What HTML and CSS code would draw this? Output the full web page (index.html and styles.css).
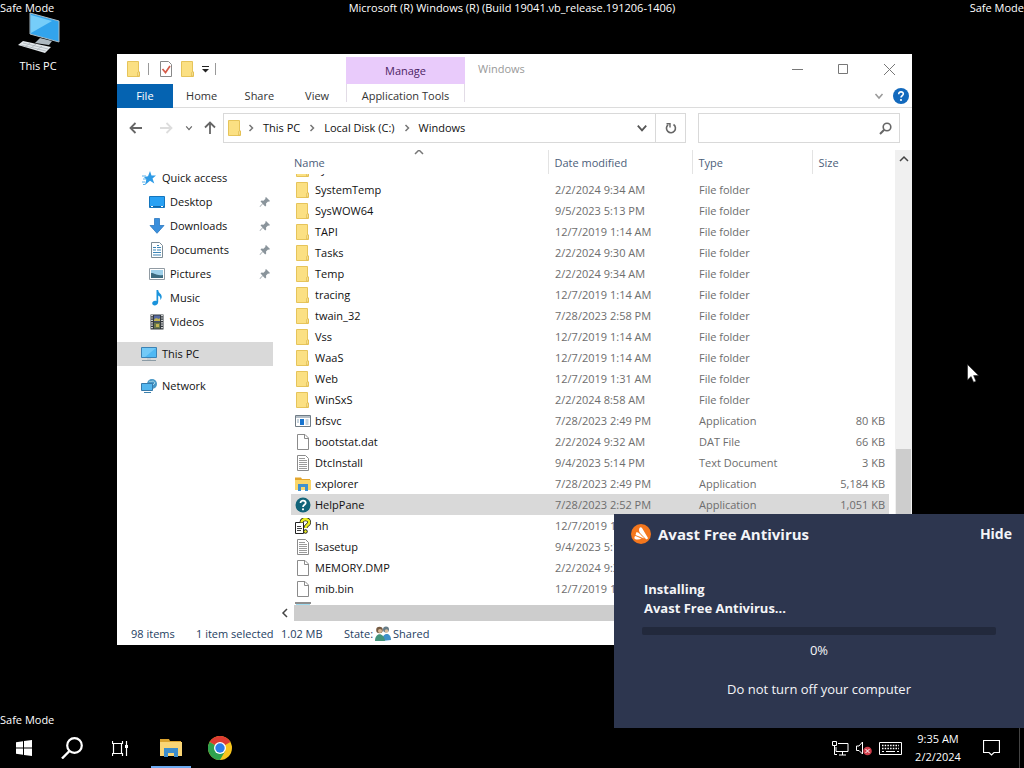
FILE: index.html
```html
<!DOCTYPE html>
<html lang="en">
<head>
<meta charset="utf-8">
<meta name="viewport" content="width=device-width, initial-scale=1">
<title>Windows</title>
<link rel="stylesheet" href="styles.css">
</head>
<body>
<svg class="defs" aria-hidden="true">
  <symbol id="folder" viewBox="0 0 16 16"><path d="M1.500 .5h11v10.500h1v4.500h-12z" fill="#fbe083" stroke="#e6c45a"/><path d="M11.500 15v-3.500l1.500-1v4.500z" fill="#fff3b8" stroke="#dfb94a" stroke-width=".7"/></symbol>
  <symbol id="blank" viewBox="0 0 16 16"><path d="M2.500.5h7.500l3.500 3.500v11.500h-11z" fill="#fff" stroke="#8b8b8b"/><path d="M9.500.5v4h4" fill="none" stroke="#8b8b8b"/></symbol>
  <symbol id="text" viewBox="0 0 16 16"><path d="M2.500.5h8l3 3v12h-11z" fill="#fff" stroke="#8b8b8b"/><path d="M4 3.500h6M4 5.500h8M4 7.500h8M4 9.500h8M4 11.500h8M4 13.500h8" stroke="#9b9b9b"/></symbol>
  <symbol id="app" viewBox="0 0 16 16"><path d="M.5 2.500h15v11H.5z" fill="#fff" stroke="#707c86"/><path d="M1 3h14v2H1z" fill="#b4bec6"/><path d="M5 6h4v6H5z" fill="#1874cf"/><path d="M2 7h2M2 9h2M10.500 7h3M10.500 9h3M10.500 11h3" stroke="#8fa9bd"/></symbol>
  <symbol id="explorer" viewBox="0 0 16 16"><path d="M0 1.500h6l1 1.500h8v11H0z" fill="#e3a52c"/><path d="M0 4h16v10H0z" fill="#fbd669"/><path d="M3 15V8h10v7h-3v-4H6v4z" fill="#3f91cf"/></symbol>
  <symbol id="help" viewBox="0 0 16 16"><circle cx="8" cy="8" r="7.500" fill="#126479"/><path d="M5.500 6c0-3.500 5.500-3 5.200 0C10.500 7.700 8 7.800 8 10" fill="none" stroke="#fff" stroke-width="1.800"/><circle cx="8" cy="12.300" r="1.100" fill="#fff"/></symbol>
  <symbol id="hh" viewBox="0 0 16 16"><path d="M.5 4.500h8v11h-8z" fill="#fff" stroke="#222"/><path d="M2 8.500h4M2 10.500h5M2 12.500h4" stroke="#444"/><path d="M6.500 4.500C6.500 0 15 0 14 5c-.3 2-3.500 2.300-3.500 5" fill="none" stroke="#222" stroke-width="4"/><path d="M6.500 4.500C6.500 0 15 0 14 5c-.3 2-3.500 2.300-3.500 5" fill="none" stroke="#e9ed20" stroke-width="2.500"/><circle cx="10.500" cy="13.500" r="1.800" fill="#e9ed20" stroke="#222"/></symbol>
  <symbol id="notepad" viewBox="0 0 16 16"><path d="M0 0h16v2H0z" fill="#8e8e8e"/><path d="M1 2h14v13H1z" fill="#9edbf0"/></symbol>
  <symbol id="star" viewBox="0 0 16 16"><path d="M9 1l1.500 4.500H15l-3.500 3 1.800 5L9 10.800 4 15l1.300-5.500L3 7l4-.8z" fill="#2e9be6"/><path d="M1 6h4M2 9h3M1 12h3M2 14.500h2" stroke="#5ab1ea"/></symbol>
  <symbol id="desktop" viewBox="0 0 16 16"><path d="M.5 2.500h15v11H.5z" fill="#28a1f4" stroke="#1475bd"/><path d="M1 12.500h14" stroke="#1267a8"/><path d="M2 12.500h2m8 0h2" stroke="#fff"/></symbol>
  <symbol id="down" viewBox="0 0 16 16"><path d="M5.500.5h5v7h4.500L8 15.300 1 7.500h4.500z" fill="#3a8fdc" stroke="#2b77c0" stroke-width=".8"/></symbol>
  <symbol id="docs" viewBox="0 0 16 16"><path d="M2.500.5h8l3 3v12h-11z" fill="#fff" stroke="#7c8c96"/><path d="M4 5.500h3M8 3.500h2M8 5.500h4M4 8h3M8 8h4M4 10.500h8M4 13h8" stroke="#3c86b8" stroke-width="1.200"/></symbol>
  <symbol id="pics" viewBox="0 0 16 16"><path d="M.5 2.500h15v11H.5z" fill="#fff" stroke="#919ba3"/><path d="M2 4h12v8H2z" fill="#9ed0ea"/><path d="M2 7c4 0 5 3 12 2v3H2z" fill="#3c6b80"/></symbol>
  <symbol id="music" viewBox="0 0 16 16"><path d="M7.500 0h1.700c.2 3.500 4.500 4 3.300 8-.3 1-.8 1.500-1.300 2 .6-2.600-.6-4-2-4.500V12c0 4-6 4.500-6 1.300 0-2 2.300-3 4.300-2.200z" fill="#1a93dc"/></symbol>
  <symbol id="video" viewBox="0 0 16 16"><path d="M1.500.5h13v15h-13z" fill="#33383d"/><path d="M3 1v14M13 1v14" stroke="#fff" stroke-width="1.500" stroke-dasharray="1.200 1.200"/><path d="M5 1.500h6v6H5z" fill="#566aa3"/><path d="M5 8.500h6v6H5z" fill="#67774c"/><path d="M5 6c3-4 4 1 6-2v3H5zM7 10h3v3H7z" fill="#c3b451"/></symbol>
  <symbol id="pc" viewBox="0 0 16 16"><path d="M.5 1.500h15v10H.5z" fill="#4fb8f3" stroke="#3b82b5"/><path d="M1 2h14L4 11H1z" fill="#8bd3fa" opacity=".6"/><path d="M1 14.500h14" stroke="#8b9ba5"/><path d="M6 12h4v2H6z" fill="#c5cdd2"/></symbol>
  <symbol id="network" viewBox="0 0 16 16"><circle cx="11" cy="6" r="5" fill="#4797c6"/><path d="M8 3c2 2 4-2 6 2l-3 3" fill="none" stroke="#a6d6e9"/><path d="M.5 5.500h11v7H.5z" fill="#53b6ee" stroke="#3679a9"/><path d="M3 14.500h7" stroke="#3c81ad"/></symbol>
  <symbol id="pin" viewBox="0 0 12 12"><path d="M7 1l4 4-1 .8-1-.3-2 2 .2 2-1 1L3.800 8 1 11l-.4-.4L3.500 7.600 1.500 5.500l1-1 2 .2 2-2L6.200 2z" fill="#8a949b"/></symbol>
  <symbol id="chev-down" viewBox="0 0 10 10"><path d="M1.500 3l3.500 4 3.500-4" fill="none" stroke="currentColor" stroke-width="1.500"/></symbol>
  <symbol id="chev-up" viewBox="0 0 10 10"><path d="M1 7l4-4 4 4" fill="none" stroke="currentColor" stroke-width="1.500"/></symbol>
  <symbol id="chev-right" viewBox="0 0 10 10"><path d="M3.500 2l3 3-3 3" fill="none" stroke="currentColor" stroke-width="1.500"/></symbol>
  <symbol id="arrow" viewBox="0 0 14 14"><path d="M13 7H2M6.500 2L1.500 7l5 5" fill="none" stroke="currentColor" stroke-width="1.800"/></symbol>
</svg>

<div class="screen">
  <main class="desktop">
    <div class="safe-top"><span>Safe Mode</span><span>Microsoft (R) Windows (R) (Build 19041.vb_release.191206-1406)</span><span>Safe Mode</span></div>
    <a class="shortcut" href="#">
      <svg width="46" height="42" viewBox="0 0 46 42"><path d="M15 1l29 8v21l-29-8z" fill="#32a4ed" stroke="#a9bac4"/><path d="M16 3l21 6-21 12z" fill="#76cdf9"/><path d="M25 26l12 3-3 4-14-2z" fill="#aeb9c0"/><path d="M8 29l28 6-6 6L3 33z" fill="#e3e8eb"/><path d="M8 31l25 6M6 33l25 6M15 31l-5 4M21 32l-5 4M27 34l-5 4" stroke="#a4adb3" stroke-width=".7"/></svg>
      <span>This PC</span>
    </a>
    <span class="safe-bottom">Safe Mode</span>

    <section class="window" aria-label="Windows folder">
      <header class="ribbon">
        <div class="ribbon-left">
          <div class="quick">
            <svg class="i16"><use href="#folder"/></svg><i class="bar"></i>
            <button class="plain check" aria-label="Properties"><svg class="i16" viewBox="0 0 16 16"><path d="M2.500.5h8l3 3v12h-11z" fill="#fff" stroke="#888"/><path d="M4.500 8l3 3.500L12 5" fill="none" stroke="#d55b49" stroke-width="1.700"/></svg></button>
            <button class="plain" aria-label="New folder"><svg class="i16"><use href="#folder"/></svg></button>
            <button class="plain" aria-label="Customize toolbar"><svg width="7" height="8" viewBox="0 0 7 8"><path d="M0 1.500h7" stroke="#222"/><path d="M0 4h7L3.500 7.500z" fill="#222"/></svg></button><i class="bar"></i>
          </div>
          <nav class="tabs"><button class="file">File</button><button>Home</button><button>Share</button><button>View</button></nav>
        </div>
        <div class="context"><div class="manage">Manage</div><button>Application Tools</button></div>
        <div class="ribbon-right">
          <div class="caption"><span class="title">Windows</span>
            <button aria-label="Minimize"><svg width="11" height="11"><path d="M0 5.500h11" stroke="#777"/></svg></button>
            <button aria-label="Maximize"><svg width="11" height="11"><path d="M.5.5h9v9h-9z" fill="none" stroke="#777"/></svg></button>
            <button aria-label="Close"><svg width="11" height="11"><path d="M0 0l11 11M11 0L0 11" stroke="#777"/></svg></button>
          </div>
          <div class="ribbon-tools"><button class="plain" aria-label="Expand ribbon"><svg class="i10"><use href="#chev-down"/></svg></button>
            <button class="plain" aria-label="Help"><svg class="i16" viewBox="0 0 16 16"><circle cx="8" cy="8" r="8" fill="#1269bd"/><path d="M5.700 6.200c0-3.300 4.800-2.800 4.600-.2C10.200 7.500 8 7.700 8 9.600" fill="none" stroke="#fff" stroke-width="1.600"/><circle cx="8" cy="12" r="1.100" fill="#fff"/></svg></button></div>
        </div>
      </header>

      <div class="address">
        <div class="history">
          <button class="plain" aria-label="Back"><svg class="i14"><use href="#arrow"/></svg></button>
          <button class="plain off" aria-label="Forward"><svg class="i14 flip"><use href="#arrow"/></svg></button>
          <button class="plain recent" aria-label="Recent locations"><svg class="i8"><use href="#chev-down"/></svg></button>
          <button class="plain" aria-label="Up"><svg class="i14 up"><use href="#arrow"/></svg></button>
        </div>
        <div class="path">
          <svg class="i16"><use href="#folder"/></svg>
          <svg class="i10 first"><use href="#chev-right"/></svg><a href="#">This PC</a>
          <svg class="i10"><use href="#chev-right"/></svg><a href="#">Local Disk (C:)</a>
          <svg class="i10"><use href="#chev-right"/></svg><a href="#">Windows</a>
          <button class="plain drop" aria-label="Previous locations"><svg class="i12"><use href="#chev-down"/></svg></button>
          <button class="refresh" aria-label="Refresh"><svg width="12" height="12" viewBox="0 0 12 12"><path d="M8.500 2.500A4.500 4.500 0 1 1 3 2.800" fill="none" stroke="#666" stroke-width="1.600"/><path d="M1.500 1.700H5v3.800" fill="none" stroke="#666" stroke-width="1.400"/></svg></button>
        </div>
        <div class="search"><input type="search" aria-label="Search Windows"><svg width="13" height="13" viewBox="0 0 13 13"><circle cx="8" cy="5" r="3.800" fill="none" stroke="#666" stroke-width="1.600"/><path d="M5.200 7.800L1 12" stroke="#666" stroke-width="2"/></svg></div>
      </div>

      <div class="content">
        <nav class="side">
          <a href="#"><svg class="i16"><use href="#star"/></svg>Quick access</a>
          <a class="sub" href="#"><svg class="i16"><use href="#desktop"/></svg>Desktop<svg class="pin"><use href="#pin"/></svg></a>
          <a class="sub" href="#"><svg class="i16"><use href="#down"/></svg>Downloads<svg class="pin"><use href="#pin"/></svg></a>
          <a class="sub" href="#"><svg class="i16"><use href="#docs"/></svg>Documents<svg class="pin"><use href="#pin"/></svg></a>
          <a class="sub" href="#"><svg class="i16"><use href="#pics"/></svg>Pictures<svg class="pin"><use href="#pin"/></svg></a>
          <a class="sub" href="#"><svg class="i16"><use href="#music"/></svg>Music</a>
          <a class="sub" href="#"><svg class="i16"><use href="#video"/></svg>Videos</a>
          <a class="group current" href="#"><svg class="i16"><use href="#pc"/></svg>This PC</a>
          <a class="group" href="#"><svg class="i16"><use href="#network"/></svg>Network</a>
        </nav>
        <div class="pane">
          <div class="list">
            <table>
              <thead><tr><th class="c-name">Name<svg class="i10 sort"><use href="#chev-up"/></svg></th><th class="c-date">Date modified</th><th class="c-type">Type</th><th class="c-size">Size</th></tr></thead>
              <tbody>
                <tr class="cut"><td><div><span class="f"><svg class="i16"><use href="#folder"/></svg>SystemResources</span></div></td><td></td><td></td><td></td></tr>
                <tr><td><span class="f"><svg class="i16"><use href="#folder"/></svg>SystemTemp</span></td><td>2/2/2024 9:34 AM</td><td>File folder</td><td></td></tr>
                <tr><td><span class="f"><svg class="i16"><use href="#folder"/></svg>SysWOW64</span></td><td>9/5/2023 5:13 PM</td><td>File folder</td><td></td></tr>
                <tr><td><span class="f"><svg class="i16"><use href="#folder"/></svg>TAPI</span></td><td>12/7/2019 1:14 AM</td><td>File folder</td><td></td></tr>
                <tr><td><span class="f"><svg class="i16"><use href="#folder"/></svg>Tasks</span></td><td>2/2/2024 9:30 AM</td><td>File folder</td><td></td></tr>
                <tr><td><span class="f"><svg class="i16"><use href="#folder"/></svg>Temp</span></td><td>2/2/2024 9:34 AM</td><td>File folder</td><td></td></tr>
                <tr><td><span class="f"><svg class="i16"><use href="#folder"/></svg>tracing</span></td><td>12/7/2019 1:14 AM</td><td>File folder</td><td></td></tr>
                <tr><td><span class="f"><svg class="i16"><use href="#folder"/></svg>twain_32</span></td><td>7/28/2023 2:58 PM</td><td>File folder</td><td></td></tr>
                <tr><td><span class="f"><svg class="i16"><use href="#folder"/></svg>Vss</span></td><td>12/7/2019 1:14 AM</td><td>File folder</td><td></td></tr>
                <tr><td><span class="f"><svg class="i16"><use href="#folder"/></svg>WaaS</span></td><td>12/7/2019 1:14 AM</td><td>File folder</td><td></td></tr>
                <tr><td><span class="f"><svg class="i16"><use href="#folder"/></svg>Web</span></td><td>12/7/2019 1:31 AM</td><td>File folder</td><td></td></tr>
                <tr><td><span class="f"><svg class="i16"><use href="#folder"/></svg>WinSxS</span></td><td>2/2/2024 8:58 AM</td><td>File folder</td><td></td></tr>
                <tr><td><span class="f"><svg class="i16"><use href="#app"/></svg>bfsvc</span></td><td>7/28/2023 2:49 PM</td><td>Application</td><td>80 KB</td></tr>
                <tr><td><span class="f"><svg class="i16"><use href="#blank"/></svg>bootstat.dat</span></td><td>2/2/2024 9:32 AM</td><td>DAT File</td><td>66 KB</td></tr>
                <tr><td><span class="f"><svg class="i16"><use href="#text"/></svg>DtcInstall</span></td><td>9/4/2023 5:14 PM</td><td>Text Document</td><td>3 KB</td></tr>
                <tr><td><span class="f"><svg class="i16"><use href="#explorer"/></svg>explorer</span></td><td>7/28/2023 2:49 PM</td><td>Application</td><td>5,184 KB</td></tr>
                <tr class="selected"><td><span class="f"><svg class="i16"><use href="#help"/></svg>HelpPane</span></td><td>7/28/2023 2:52 PM</td><td>Application</td><td>1,051 KB</td></tr>
                <tr><td><span class="f"><svg class="i16"><use href="#hh"/></svg>hh</span></td><td>12/7/2019 1:14 AM</td><td></td><td></td></tr>
                <tr><td><span class="f"><svg class="i16"><use href="#text"/></svg>lsasetup</span></td><td>9/4/2023 5:14 PM</td><td></td><td></td></tr>
                <tr><td><span class="f"><svg class="i16"><use href="#blank"/></svg>MEMORY.DMP</span></td><td>2/2/2024 9:32 AM</td><td></td><td></td></tr>
                <tr><td><span class="f"><svg class="i16"><use href="#blank"/></svg>mib.bin</span></td><td>12/7/2019 1:14 AM</td><td></td><td></td></tr>
                <tr><td><span class="f"><svg class="i16"><use href="#notepad"/></svg></span></td><td></td><td></td><td></td></tr>
              </tbody>
            </table>
          </div>
          <div class="hscroll"><button class="plain" aria-label="Scroll left"><svg class="i10 left"><use href="#chev-up"/></svg></button><div class="thumb"></div></div>
        </div>
        <div class="vscroll"><button class="plain" aria-label="Scroll up"><svg class="i10"><use href="#chev-up"/></svg></button><div class="track"></div><div class="thumb"></div></div>
      </div>
      <footer class="status"><span class="s-items">98 items</span><span class="s-sel">1 item selected</span><span class="s-mb">1.02 MB</span><span>State:</span><svg class="i16" viewBox="0 0 16 16"><circle cx="11" cy="3.500" r="3" fill="#657c88"/><path d="M7 15c0-9 9-9 9-1z" fill="#3e91c9"/><circle cx="4.500" cy="4" r="3.300" fill="#765b42"/><circle cx="5" cy="5" r="2" fill="#d6b793"/><path d="M0 15c0-9 9-9 10 0z" fill="#43947b"/><circle cx="11.500" cy="5" r="1.800" fill="#d9bd9d"/></svg><span>Shared</span></footer>
    </section>

    <svg class="cursor" width="12" height="19" viewBox="0 0 12 19"><path d="M.5.500v15.500l3.600-3.500 2.500 5.700 2.400-1-2.400-5.600h5z" fill="#fff" stroke="#222" stroke-width=".6"/></svg>

    <section class="avast">
      <header><svg width="20" height="20" viewBox="0 0 20 20"><circle cx="10" cy="10" r="10" fill="#f4771d"/><path d="M8.500 4c.6-1 1.900-1 2.500 0l5.700 9.500c.6 1.300-.7 2.200-1.800 1.400L9.500 9.500C8 8 7.600 6 8.500 4z" fill="#fff"/><path d="M5.500 8c2 .3 3 1.500 8 6.500-4-1.500-7-2.800-9-3.500z" fill="#fff"/><path d="M4 12c2.500.8 4.500 1.500 6.500 2.800-2 .8-5 1-6.500.2-1-.6-.7-1.800 0-3z" fill="#fff"/></svg><h1>Avast Free Antivirus</h1><button>Hide</button></header>
      <p class="installing">Installing<br>Avast Free Antivirus...</p>
      <div class="progress" role="progressbar" aria-label="Installation" aria-valuenow="0"></div>
      <p class="percent">0%</p>
      <p class="warning">Do not turn off your computer</p>
    </section>
  </main>

  <footer class="taskbar">
    <button aria-label="Start"><svg width="16" height="16" viewBox="0 0 16 16"><path d="M0 2.300L7 1.300v6.200H0zM8 1.100L16 0v7.500H8zM0 8.500h7v6.200l-7-1zM8 8.500h8V16l-8-1.100z" fill="#fff"/></svg></button>
    <button aria-label="Search"><svg width="22" height="22" viewBox="0 0 22 22"><circle cx="13.500" cy="8.500" r="7.300" fill="none" stroke="#fff" stroke-width="2.200"/><path d="M8.500 14L1 21.500" stroke="#fff" stroke-width="2.400"/></svg></button>
    <button aria-label="Task view"><svg width="17" height="17" viewBox="0 0 17 17"><path d="M.5 1v2.500h10V1M.5 16v-2.500h10V16M1.500 4v9M9.500 4v9M14.500 1v15" fill="none" stroke="#fff" stroke-width="1.200"/><path d="M13 5h3v3h-3z" fill="#fff"/></svg></button>
    <button class="open" aria-label="File Explorer"><svg width="22" height="20" viewBox="0 0 22 20"><path d="M0 1h9l1 2h11v4H0z" fill="#dca42f"/><path d="M0 4h22v14H0z" fill="#fad575"/><path d="M4 19v-9h14v9h-4v-4H8v4z" fill="#3d8dcc"/></svg></button>
    <button aria-label="Chrome"><svg width="24" height="24" viewBox="0 0 24 24"><circle cx="12" cy="12" r="12" fill="#f8c51d"/><path d="M12 12L1.600 6A12 12 0 0 1 22.400 6z" fill="#de3c32"/><path d="M1.600 6A12 12 0 0 0 12 24l5.200-9L12 12z" fill="#2fa24e"/><circle cx="12" cy="12" r="6" fill="#fff"/><circle cx="12" cy="12" r="4.700" fill="#2b7de9"/></svg></button>
    <div class="tray">
      <svg width="17" height="15" viewBox="0 0 17 15"><path d="M6 2.500h10v8H4V6M7 14h7M10.500 11v3M.5.500h4v4h-4zM2.500 5v8.500H5" fill="none" stroke="#fff"/></svg>
      <svg width="16" height="15" viewBox="0 0 16 15"><path d="M.5 5h2.500l3.500-4v12L3 9.500H.5z" fill="none" stroke="#fff"/><circle cx="11.500" cy="10" r="4.300" fill="#d13e4b"/><path d="M9.500 8l4 4M13.500 8l-4 4" stroke="#fff"/></svg>
      <svg width="23" height="13" viewBox="0 0 23 13"><path d="M.5.500h22v12H.5z" fill="none" stroke="#fff"/><path d="M3 3.500h17M3 6.500h17" stroke="#fff" stroke-width="1.400" stroke-dasharray="1.500 1.200"/><path d="M3 9.500h2M7 9.500h9M18 9.500h2" stroke="#fff"/></svg>
      <time datetime="2024-02-02T09:35">9:35 AM<br>2/2/2024</time>
      <button aria-label="Notifications"><svg width="17" height="16" viewBox="0 0 17 16"><path d="M.5.500h16v12h-5.500L8.500 15 6 12.500H.5z" fill="none" stroke="#fff" stroke-width="1.200"/></svg></button>
    </div>
  </footer>
</div>
</body>
</html>
```
FILE: styles.css
```css
* { box-sizing: border-box; }
body { margin: 0; background: #000; color: #fff; font: 11px/16px "Open Sans", "Noto Sans", sans-serif; }
button { font: inherit; color: inherit; background: none; border: 0; padding: 0; display: flex; align-items: center; justify-content: center; }
a { color: inherit; text-decoration: none; }
p, h1 { margin: 0; }
svg { flex: none; display: block; }
.defs { position: absolute; width: 0; height: 0; }
.i16 { width: 16px; height: 16px; }
.i14 { width: 14px; height: 14px; }
.i12 { width: 12px; height: 12px; }
.i10 { width: 10px; height: 10px; }
.i8 { width: 8px; height: 8px; }
.flip { transform: rotate(180deg); }
.up { transform: rotate(90deg); }
.left { transform: rotate(-90deg); }

.screen { height: 100vh; display: flex; flex-direction: column; overflow: hidden; }
.desktop { flex: 1; min-height: 0; position: relative; display: flex; flex-direction: column; align-items: flex-start; }
.safe-top { width: 100%; display: flex; justify-content: space-between; }
.safe-bottom { margin-top: auto; }
.shortcut { display: flex; flex-direction: column; align-items: center; width: 76px; margin-top: -4px; gap: 4px; }

/* explorer window */
.window { position: absolute; left: 117px; right: 112px; top: 54px; bottom: 83px; background: #fff; color: #222; display: flex; flex-direction: column; overflow: hidden; }
.ribbon { display: flex; height: 54px; border-bottom: 1px solid #dcdcdc; }
.ribbon-left { width: 229px; }
.quick { height: 30px; padding-left: 9px; display: flex; align-items: center; gap: 6px; }
.bar { width: 1px; height: 12px; background: #999; }
.check { margin-left: 3px; }
.tabs { display: flex; height: 24px; }
.tabs button { width: 58px; color: #333; }
.tabs .file { width: 56px; background: #0563b1; color: #fff; }
.context { width: 119px; padding-top: 3px; color: #333; }
.manage { height: 27px; background: #e9cbfb; color: #4c2464; text-align: center; line-height: 28px; }
.context button { width: 100%; height: 18px; padding-top: 6px; border: solid #e2dce6; border-width: 0 1px; }
.ribbon-right { flex: 1; }
.caption { height: 30px; display: flex; align-items: center; }
.title { margin-right: auto; padding-left: 13px; color: #999; }
.caption button { width: 46px; height: 28px; }
.ribbon-tools { display: flex; align-items: center; justify-content: flex-end; gap: 9px; height: 23px; padding-right: 3px; color: #999; }

.address { display: flex; height: 42px; padding: 5px 12px 7px 0; }
.history { display: flex; align-items: center; gap: 10px; width: 106px; padding-left: 12px; color: #666; }
.off { color: #ddd; margin-left: 6px; }
.recent { margin-left: 2px; }
.path { flex: 1; display: flex; align-items: center; gap: 7px; border: 1px solid #d9d9d9; padding-left: 3px; color: #111; }
.path > svg { color: #777; }
.path > .first { margin-left: -4px; }
.drop { margin-left: auto; color: #555; }
.refresh { width: 30px; height: 100%; border-left: 1px solid #d9d9d9; }
.search { width: 202px; margin-left: 12px; display: flex; align-items: center; border: 1px solid #d9d9d9; padding-right: 7px; }
.search input { flex: 1; min-width: 0; height: 100%; border: 0; outline: 0; background: none; }

.content { flex: 1; min-height: 0; display: flex; }
.side { width: 156px; padding-top: 16px; color: #111; }
.side a { display: flex; align-items: center; gap: 5px; height: 24px; padding-left: 24px; }
.side .sub { padding-left: 32px; }
.side .group { margin-top: 8px; }
.side .current { background: #d9d9d9; }
.pin { width: 12px; height: 12px; margin-left: auto; margin-right: 2px; }
.pane { flex: 1; min-width: 0; display: flex; flex-direction: column; padding-left: 2px; }
.list { flex: 1; min-height: 0; overflow: hidden; padding: 0 6px 0 16px; }
table { width: 100%; table-layout: fixed; border-collapse: collapse; color: #6d6d6d; }
th { height: 24px; padding: 2px 0 0 6px; font-weight: 400; text-align: left; color: #4c607a; border-left: 1px solid #e3e3e3; position: relative; }
.c-name { padding-left: 3px; border-left: 0; }
.c-date { width: 144px; }
.c-type { width: 120px; }
.c-size { width: 77px; }
.sort { position: absolute; left: 48%; top: -3px; color: #777; }
td { height: 21px; padding: 0 0 0 7px; white-space: nowrap; overflow: hidden; }
td:first-child { padding-left: 4px; color: #111; }
td:last-child { padding: 0 4px 0 0; text-align: right; }
.f { display: flex; align-items: center; gap: 4px; height: 21px; }
.cut td { height: 5px; }
.cut div { height: 5px; display: flex; align-items: flex-end; overflow: hidden; }
.selected { background: #d9d9d9; }
.hscroll { display: flex; height: 16px; }
.hscroll button { width: 19px; color: #444; }
.hscroll .thumb { flex: 1; background: #cdcdcd; }
.vscroll { width: 17px; display: flex; flex-direction: column; background: #f0f0f0; }
.vscroll button { height: 18px; width: 100%; color: #444; }
.vscroll .track { flex: 282; }
.vscroll .thumb { flex: 172; background: #cdcdcd; margin: 0 1px; }
.status { display: flex; align-items: center; height: 24px; padding: 2px 0 0 14px; color: #25405f; }
.s-items { width: 65px; }
.s-sel { width: 85px; }
.s-mb { width: 63px; }
.status svg { margin: 0 2px; }

.cursor { position: absolute; left: 967px; top: 364px; }

/* installer popup */
.avast { position: absolute; right: 0; bottom: 0; width: 410px; height: 214px; background: #2d364f; padding: 10px 28px 0; display: flex; flex-direction: column; color: #f4f5f8; }
.avast header { display: flex; align-items: center; gap: 7px; margin: 0 -16px 0 -11px; height: 20px; }
.avast h1 { font-size: 15px; line-height: 20px; font-weight: 700; flex: 1; }
.avast header button { font-size: 14px; font-weight: 700; }
.installing { margin: 36px 2px 0; font-size: 13px; line-height: 19px; font-weight: 700; }
.progress { height: 8px; margin-top: 9px; background: #22293c; border-radius: 2px; }
.percent { text-align: center; margin-top: 7px; font-size: 13px; line-height: 16px; }
.warning { text-align: center; margin-top: 23px; font-size: 13px; line-height: 16px; }

.taskbar { height: 40px; display: flex; align-items: stretch; background: #000; }
.taskbar > button { width: 48px; }
.taskbar > .open { border-bottom: 2px solid #6daaf0; width: 40px; margin: 0 5px 0 7px; padding-top: 2px; }
.tray { margin-left: auto; margin-right: 4px; display: flex; align-items: center; gap: 7px; padding-right: 11px; border-right: 1px solid #444; }
.tray time { text-align: center; line-height: 18px; width: 58px; }
.tray button { width: 34px; height: 100%; }
```
